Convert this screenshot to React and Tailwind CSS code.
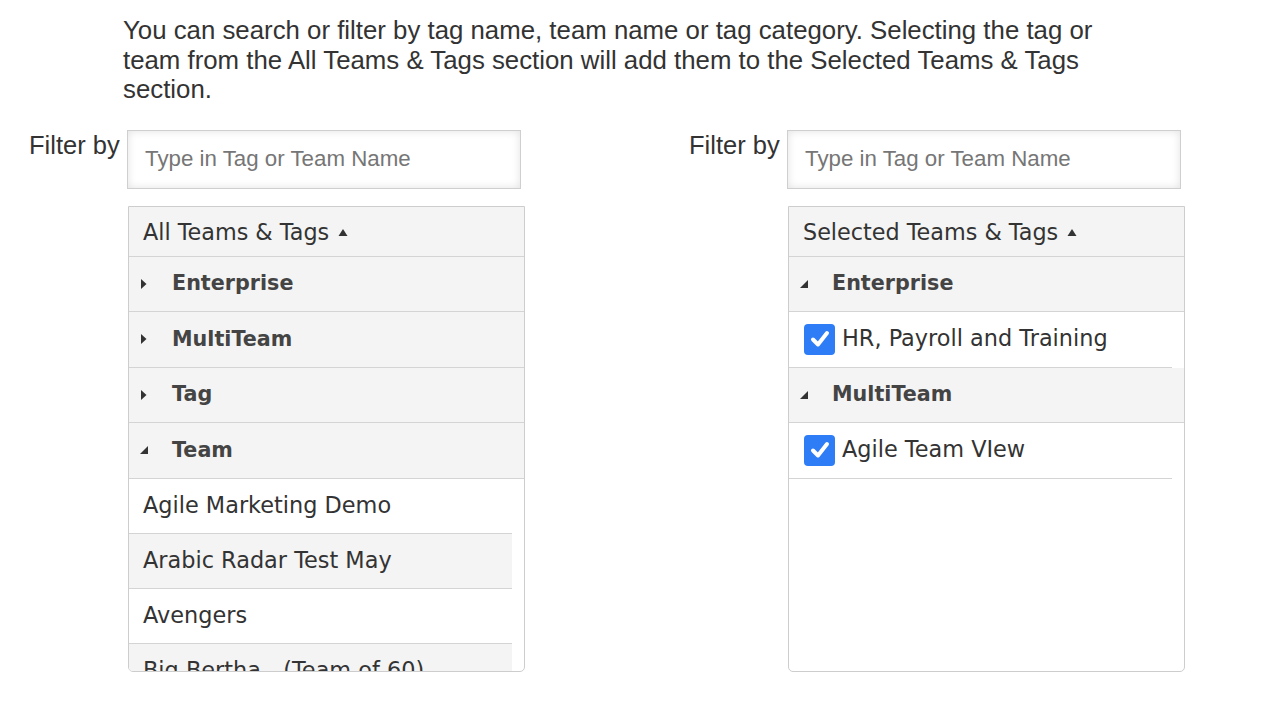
import React from 'react';

const allGroups = [
    { name: 'Enterprise', open: false },
    { name: 'MultiTeam', open: false },
    { name: 'Tag', open: false },
    { name: 'Team', open: true },
];

const teams = ['Agile Marketing Demo', 'Arabic Radar Test May', 'Avengers', 'Big Bertha - (Team of 60)'];

const selected = [
    { name: 'Enterprise', items: ['HR, Payroll and Training'] },
    { name: 'MultiTeam', items: ['Agile Team VIew'] },
];

function Caret({ open }) {
    if (open) {
        return (
            <svg width="10" height="10" viewBox="0 0 10 10" className="shrink-0">
                <polygon points="9,1 9,9 1,9" fill="#333" />
            </svg>
        );
    }
    return (
        <svg width="10" height="12" viewBox="0 0 10 12" className="shrink-0">
            <polygon points="2,1 7.5,6 2,11" fill="#333" />
        </svg>
    );
}

function SortUp() {
    return (
        <svg width="10" height="8" viewBox="0 0 10 8" className="ml-[9px] shrink-0">
            <polygon points="5,0 9.5,7 0.5,7" fill="#333" />
        </svg>
    );
}

function Check() {
    return (
        <span className="w-[31px] h-[31px] rounded-[4px] bg-[#2e7cf6] flex items-center justify-center shrink-0">
            <svg width="22" height="22" viewBox="0 0 22 22">
                <path d="M4 11.5 L9 16.5 L18 5" stroke="#fff" strokeWidth="4" fill="none" strokeLinecap="round" strokeLinejoin="round" />
            </svg>
        </span>
    );
}

function GroupRow({ name, open }) {
    return (
        <div className="h-[55.5px] bg-[#f4f4f4] border-b border-[#d4d4d4] flex items-center pl-[10px]">
            <Caret open={open} />
            <span className="ml-[23px] text-[20.7px] font-bold text-[#444]">{name}</span>
        </div>
    );
}

function FilterBox() {
    return (
        <input
            type="text"
            placeholder="Type in Tag or Team Name"
            className="w-[394px] h-[59px] border border-[#cfcfcf] shadow-[inset_0_0_8px_rgba(0,0,0,0.12)] px-[17px] text-[22.3px] text-[#333] placeholder:text-[#767676] outline-none font-['Liberation_Sans',Arial,sans-serif]"
        />
    );
}

function Panel({ title, children }) {
    return (
        <div className="mt-[17px] ml-px w-[397px] h-[466px] border border-[#cdcdcd] rounded-b-[5px] overflow-hidden bg-white">
            <div className="h-[50px] pt-[3px] bg-[#f4f4f4] border-b border-[#d4d4d4] flex items-center pl-[14px] text-[22.3px] text-[#333]">
                {title}
                <SortUp />
            </div>
            {children}
        </div>
    );
}

export default function App() {
    return (
        <div className="w-[1262px] h-[712px] bg-white text-[#333] font-['DejaVu_Sans',Verdana,sans-serif]">
            <p className="pl-[123px] pt-[16px] w-[1123px] text-[25.8px] leading-[29.5px] text-[#333] font-['Liberation_Sans',Arial,sans-serif]">
                You can search or filter by tag name, team name or tag category. Selecting the tag or team from the All Teams &amp; Tags section will add them to the Selected Teams &amp; Tags section.
            </p>

            <div className="flex mt-[25px] pl-[29px]">
                <div className="w-[660px] flex">
                    <div className="w-[98px] leading-[30px] text-[25.5px] font-['Liberation_Sans',Arial,sans-serif]">Filter by</div>
                    <div>
                        <FilterBox />
                        <Panel title="All Teams & Tags">
                            {allGroups.map((g) => (
                                <GroupRow key={g.name} name={g.name} open={g.open} />
                            ))}
                            {teams.map((t, i) => (
                                <div
                                    key={t}
                                    className={`h-[55px] mr-[12px] border-b border-[#d4d4d4] flex items-center pl-[14px] text-[22.4px] text-[#333] whitespace-nowrap ${i % 2 ? 'bg-[#f4f4f4]' : 'bg-white'}`}
                                >
                                    {t}
                                </div>
                            ))}
                        </Panel>
                    </div>
                </div>

                <div className="flex">
                    <div className="w-[98px] leading-[30px] text-[25.5px] font-['Liberation_Sans',Arial,sans-serif]">Filter by</div>
                    <div>
                        <FilterBox />
                        <Panel title="Selected Teams & Tags">
                            {selected.map((g) => (
                                <div key={g.name}>
                                    <GroupRow name={g.name} open />
                                    {g.items.map((item) => (
                                        <div key={item} className="h-[55.5px] mr-[12px] border-b border-[#d4d4d4] flex items-center pl-[15px] text-[22.4px] text-[#333]">
                                            <Check />
                                            <span className="ml-[7px]">{item}</span>
                                        </div>
                                    ))}
                                </div>
                            ))}
                        </Panel>
                    </div>
                </div>
            </div>
        </div>
    );
}
